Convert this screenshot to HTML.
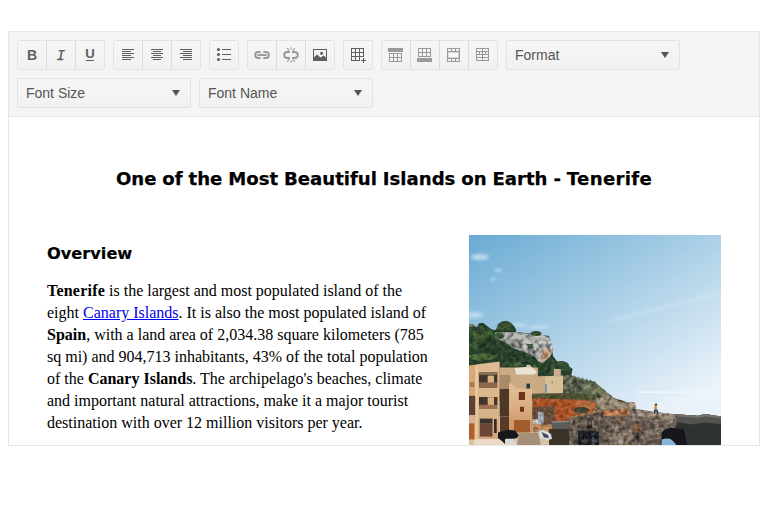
<!DOCTYPE html>
<html>
<head>
<meta charset="utf-8">
<title>Editor</title>
<style>
html,body{margin:0;padding:0;background:#fff;}
body{width:770px;height:506px;overflow:hidden;position:relative;font-family:"Liberation Sans",Arial,Helvetica,sans-serif;font-size:14px;color:#515967;}
#ed{position:absolute;left:8px;top:31px;width:750px;height:413px;border:1px solid #e8e8e8;background:#f5f5f5;}
#tb{position:absolute;left:0;top:0;width:750px;height:84px;border-bottom:1px solid #e9e9e9;background:#f5f5f5;}
.g{position:absolute;top:8px;height:28px;border:1px solid #e3e3e3;border-radius:2px;background:linear-gradient(#f6f6f6,#f1f1f1);box-sizing:content-box;}
.g i{position:absolute;top:0;width:1px;height:28px;background:#dcdcdc;}
.g svg{position:absolute;top:6px;width:16px;height:16px;overflow:visible;}
.g span{position:absolute;top:0;width:28px;height:28px;line-height:28px;text-align:center;color:#5f5f5f;font-weight:bold;}
.tB{left:0;font-size:14px;}
.tI{left:29px;font-family:"DejaVu Sans Mono","Liberation Mono",monospace;font-style:italic;font-weight:normal !important;font-size:14px;-webkit-text-stroke:0.25px #5e5e5e;color:#5e5e5e !important;top:0px !important;}
.tU{left:58px;font-size:13.2px;top:-1px !important;}
.tU:after{content:"";position:absolute;left:10px;top:20px;width:8px;height:1px;background:#5f5f5f;}
.dd{position:absolute;height:28px;width:172px;border:1px solid #e3e3e3;border-radius:2px;background:linear-gradient(#f6f6f6,#f1f1f1);line-height:28px;color:#555;font-size:14px;}
.dd span{position:absolute;left:8px;top:0;}
.dd b{position:absolute;right:10.3px;top:11px;width:0;height:0;border-left:4px solid transparent;border-right:4px solid transparent;border-top:6px solid #555;}
#ct{position:absolute;left:0;top:85px;width:750px;height:328px;background:#fff;overflow:hidden;font-family:"Liberation Serif","Times New Roman",serif;font-size:16px;color:#000;}
#h1{position:absolute;left:0;top:50px;width:750px;text-align:center;margin:0;font-family:"DejaVu Sans",Verdana,sans-serif;font-weight:bold;font-size:18.1px;line-height:24px;white-space:nowrap;letter-spacing:0;word-spacing:-0.4px;-webkit-text-stroke:0.25px #000;}
#h1 span{letter-spacing:0.33px;}
#h2{position:absolute;left:38px;top:125px;margin:0;font-family:"DejaVu Sans",Verdana,sans-serif;font-weight:bold;font-size:16.2px;line-height:24px;white-space:nowrap;-webkit-text-stroke:0.2px #000;}
#p{position:absolute;left:38px;top:163px;width:400px;margin:0;line-height:22px;white-space:nowrap;}
#p a{color:#0000ee;text-decoration:underline;}
#img{position:absolute;left:460px;top:118px;width:252px;height:252px;}
</style>
</head>
<body>
<div id="ed">
  <div id="tb">
    <div class="g" style="left:8px;width:86px"><span class="tB">B</span><i style="left:28px"></i><span class="tI">I</span><i style="left:57px"></i><span class="tU">U</span></div>
    <div class="g" style="left:104px;width:86px"><svg style="left:6px" viewBox="0 0 16 16" shape-rendering="crispEdges"><rect x="2" y="2" width="12" height="1" fill="#5f5f5f"/><rect x="2" y="4" width="9" height="1" fill="#5f5f5f"/><rect x="2" y="6" width="12" height="1" fill="#5f5f5f"/><rect x="2" y="8" width="9" height="1" fill="#5f5f5f"/><rect x="2" y="10" width="12" height="1" fill="#5f5f5f"/><rect x="2" y="12" width="9" height="1" fill="#5f5f5f"/></svg><i style="left:28px"></i><svg style="left:35px" viewBox="0 0 16 16" shape-rendering="crispEdges"><rect x="2" y="2" width="12" height="1" fill="#5f5f5f"/><rect x="4" y="4" width="8" height="1" fill="#5f5f5f"/><rect x="2" y="6" width="12" height="1" fill="#5f5f5f"/><rect x="4" y="8" width="8" height="1" fill="#5f5f5f"/><rect x="2" y="10" width="12" height="1" fill="#5f5f5f"/><rect x="4" y="12" width="8" height="1" fill="#5f5f5f"/></svg><i style="left:57px"></i><svg style="left:64px" viewBox="0 0 16 16" shape-rendering="crispEdges"><rect x="2" y="2" width="12" height="1" fill="#5f5f5f"/><rect x="5" y="4" width="9" height="1" fill="#5f5f5f"/><rect x="2" y="6" width="12" height="1" fill="#5f5f5f"/><rect x="5" y="8" width="9" height="1" fill="#5f5f5f"/><rect x="2" y="10" width="12" height="1" fill="#5f5f5f"/><rect x="5" y="12" width="9" height="1" fill="#5f5f5f"/></svg></div>
    <div class="g" style="left:200px;width:28px"><svg style="left:6px" viewBox="0 0 16 16" shape-rendering="crispEdges"><circle cx="2.5" cy="2.5" r="1.55" fill="#5f5f5f" shape-rendering="auto"/><circle cx="2.5" cy="7.5" r="1.55" fill="#5f5f5f" shape-rendering="auto"/><circle cx="2.5" cy="12.5" r="1.55" fill="#5f5f5f" shape-rendering="auto"/><rect x="6" y="2" width="9" height="1" fill="#5f5f5f"/><rect x="6" y="7" width="9" height="1" fill="#5f5f5f"/><rect x="6" y="12" width="9" height="1" fill="#5f5f5f"/></svg></div>
    <div class="g" style="left:238px;width:86px"><svg style="left:6px" viewBox="0 0 16 16" shape-rendering="crispEdges"><g fill="none" stroke="#9a9a9a" stroke-width="2" shape-rendering="auto"><path d="M6.6 5H4.2a3 3 0 0 0 0 6H6.6"/><path d="M9.4 5H11.8a3 3 0 0 1 0 6H9.4"/><path d="M3.4 8H12.6"/></g></svg><i style="left:28px"></i><svg style="left:35px" viewBox="0 0 16 16" shape-rendering="crispEdges"><g fill="none" stroke="#9a9a9a" shape-rendering="auto"><path stroke-width="2" d="M7 5H4.2a3 3 0 0 0 0 6H7"/><path stroke-width="2" d="M9 5H11.8a3 3 0 0 1 0 6H9"/><path stroke-width="1.15" d="M8 0.2V2.6M8 13.4V15.8M4.2 1.4L6.1 3.5M11.8 1.4L9.9 3.5M4.2 14.6L6.1 12.5M11.8 14.6L9.9 12.5"/></g></svg><i style="left:57px"></i><svg style="left:64px" viewBox="0 0 16 16" shape-rendering="crispEdges"><path shape-rendering="auto" fill="#5f5f5f" fill-rule="evenodd" d="M1 2H15V14H1Z M2 3V10.2L5 7.4L8.6 10.4L11.6 8.6L14 10.4V3Z"/><circle cx="9.6" cy="6.2" r="1.5" fill="#5f5f5f" shape-rendering="auto"/></svg></div>
    <div class="g" style="left:334px;width:28px"><svg style="left:6px" viewBox="0 0 16 16" shape-rendering="crispEdges"><rect x="1" y="1" width="13" height="1" fill="#5f5f5f"/><rect x="1" y="5" width="13" height="1" fill="#5f5f5f"/><rect x="1" y="9" width="13" height="1" fill="#5f5f5f"/><rect x="1" y="13" width="9" height="1" fill="#5f5f5f"/><rect x="1" y="1" width="1" height="13" fill="#5f5f5f"/><rect x="5" y="1" width="1" height="13" fill="#5f5f5f"/><rect x="9" y="1" width="1" height="13" fill="#5f5f5f"/><rect x="13" y="1" width="1" height="9" fill="#5f5f5f"/><rect x="11" y="13" width="5" height="1" fill="#5f5f5f"/><rect x="13" y="11" width="1" height="5" fill="#5f5f5f"/></svg></div>
    <div class="g" style="left:372px;width:115px"><svg style="left:6px" viewBox="0 0 16 16" shape-rendering="crispEdges"><rect x="0" y="1" width="15" height="4" fill="#9a9a9a"/><rect x="1" y="6" width="1" height="9" fill="#9a9a9a"/><rect x="5" y="6" width="1" height="9" fill="#9a9a9a"/><rect x="9" y="6" width="1" height="9" fill="#9a9a9a"/><rect x="13" y="6" width="1" height="9" fill="#9a9a9a"/><rect x="1" y="6" width="13" height="1" fill="#9a9a9a"/><rect x="1" y="10" width="13" height="1" fill="#9a9a9a"/><rect x="1" y="14" width="13" height="1" fill="#9a9a9a"/></svg><i style="left:28px"></i><svg style="left:35px" viewBox="0 0 16 16" shape-rendering="crispEdges"><rect x="1" y="1" width="1" height="9" fill="#9a9a9a"/><rect x="5" y="1" width="1" height="9" fill="#9a9a9a"/><rect x="9" y="1" width="1" height="9" fill="#9a9a9a"/><rect x="13" y="1" width="1" height="9" fill="#9a9a9a"/><rect x="1" y="1" width="13" height="1" fill="#9a9a9a"/><rect x="1" y="5" width="13" height="1" fill="#9a9a9a"/><rect x="1" y="9" width="13" height="1" fill="#9a9a9a"/><rect x="0" y="11" width="15" height="4" fill="#9a9a9a"/></svg><i style="left:57px"></i><svg style="left:64px" viewBox="0 0 16 16" shape-rendering="crispEdges"><rect x="1" y="1" width="13" height="1" fill="#9a9a9a"/><rect x="1" y="4" width="13" height="1" fill="#9a9a9a"/><rect x="1" y="11" width="13" height="1" fill="#9a9a9a"/><rect x="1" y="14" width="13" height="1" fill="#9a9a9a"/><rect x="1" y="1" width="1" height="14" fill="#9a9a9a"/><rect x="13" y="1" width="1" height="14" fill="#9a9a9a"/><rect x="5" y="1" width="1" height="4" fill="#9a9a9a"/><rect x="9" y="1" width="1" height="4" fill="#9a9a9a"/><rect x="5" y="11" width="1" height="4" fill="#9a9a9a"/><rect x="9" y="11" width="1" height="4" fill="#9a9a9a"/><rect x="2.5" y="5.5" width="10" height="5" fill="#fbfbfb" stroke="#d6d6d6" stroke-width="1"/></svg><i style="left:86px"></i><svg style="left:93px" viewBox="0 0 16 16" shape-rendering="crispEdges"><rect x="1" y="1" width="13" height="1" fill="#9a9a9a"/><rect x="1" y="4" width="13" height="1" fill="#9a9a9a"/><rect x="1" y="7" width="13" height="1" fill="#9a9a9a"/><rect x="1" y="10" width="13" height="1" fill="#9a9a9a"/><rect x="1" y="13" width="13" height="1" fill="#9a9a9a"/><rect x="1" y="1" width="1" height="13" fill="#9a9a9a"/><rect x="13" y="1" width="1" height="13" fill="#9a9a9a"/><rect x="7" y="1" width="1" height="13" fill="#9a9a9a"/><rect x="4" y="4" width="1" height="4" fill="#9a9a9a"/><rect x="10" y="4" width="1" height="4" fill="#9a9a9a"/></svg></div>
    <div class="dd" style="left:497px;top:8px"><span>Format</span><b></b></div>
    <div class="dd" style="left:8px;top:46px"><span>Font Size</span><b></b></div>
    <div class="dd" style="left:190px;top:46px"><span>Font Name</span><b></b></div>
  </div>
  <div id="ct">
    <h1 id="h1">One of the Most Beautiful Islands on Earth - <span>Tenerife</span></h1>
    <h2 id="h2">Overview</h2>
    <p id="p"><b style="letter-spacing:0.22px">Tenerife</b> is the largest and most populated island of the<br>eight <a>Canary Islands</a>. It is also the most populated island of<br><b>Spain</b>, with a land area of 2,034.38 square kilometers (785<br>sq mi) and 904,713 inhabitants, 43% of the total population<br>of the <b>Canary Islands</b>. The archipelago's beaches, climate<br>and important natural attractions, make it a major tourist<br>destination with over 12 million visitors per year.</p>
    <svg id="img" viewBox="0 0 252 252">
  <defs>
    <linearGradient id="sky" gradientUnits="userSpaceOnUse" x1="0" y1="0" x2="135" y2="219">
      <stop offset="0" stop-color="#69abd3"/>
      <stop offset="1" stop-color="#ebf3fa"/>
    </linearGradient>
    <filter id="tex" x="-2%" y="-2%" width="104%" height="104%" color-interpolation-filters="sRGB">
      <feTurbulence type="fractalNoise" baseFrequency="0.22" numOctaves="2" seed="7" result="n"/>
      <feColorMatrix in="n" type="matrix" values="0 0 0 0 0  0 0 0 0 0  0 0 0 0 0  1.4 0 0 0 -0.56" result="dk"/>
      <feColorMatrix in="n" type="matrix" values="0 0 0 0 1  0 0 0 0 1  0 0 0 0 1  0 0.8 0 0 -0.37" result="lt"/>
      <feComposite in="dk" in2="SourceGraphic" operator="in" result="dkm"/>
      <feComposite in="lt" in2="SourceGraphic" operator="in" result="ltm"/>
      <feMerge><feMergeNode in="SourceGraphic"/><feMergeNode in="dkm"/><feMergeNode in="ltm"/></feMerge>
    </filter>
    <filter id="texv" x="-2%" y="-2%" width="104%" height="104%" color-interpolation-filters="sRGB">
      <feTurbulence type="fractalNoise" baseFrequency="0.22" numOctaves="2" seed="11" result="n"/>
      <feColorMatrix in="n" type="matrix" values="0 0 0 0 0.04  0 0 0 0 0.1  0 0 0 0 0.06  1.6 0 0 0 -0.6" result="dk"/>
      <feColorMatrix in="n" type="matrix" values="0 0 0 0 0.45  0 0 0 0 0.56  0 0 0 0 0.32  0 1.0 0 0 -0.42" result="lt"/>
      <feComposite in="dk" in2="SourceGraphic" operator="in" result="dkm"/>
      <feComposite in="lt" in2="SourceGraphic" operator="in" result="ltm"/>
      <feMerge><feMergeNode in="SourceGraphic"/><feMergeNode in="dkm"/><feMergeNode in="ltm"/></feMerge>
    </filter>
    <filter id="texl" x="-2%" y="-2%" width="104%" height="104%" color-interpolation-filters="sRGB">
      <feTurbulence type="fractalNoise" baseFrequency="0.25" numOctaves="2" seed="5" result="n"/>
      <feColorMatrix in="n" type="matrix" values="0 0 0 0 0.1  0 0 0 0 0.05  0 0 0 0 0.03  0.9 0 0 0 -0.36" result="dk"/>
      <feColorMatrix in="n" type="matrix" values="0 0 0 0 1  0 0 0 0 0.85  0 0 0 0 0.7  0 0.6 0 0 -0.27" result="lt"/>
      <feComposite in="dk" in2="SourceGraphic" operator="in" result="dkm"/>
      <feComposite in="lt" in2="SourceGraphic" operator="in" result="ltm"/>
      <feMerge><feMergeNode in="SourceGraphic"/><feMergeNode in="dkm"/><feMergeNode in="ltm"/></feMerge>
    </filter>
    <linearGradient id="mb" x1="0" y1="0" x2="0" y2="1">
      <stop offset="0" stop-color="#e3be95"/><stop offset="0.45" stop-color="#dbb085"/><stop offset="1" stop-color="#c78f5f"/>
    </linearGradient>
    <linearGradient id="lb" x1="0" y1="0" x2="0" y2="1">
      <stop offset="0" stop-color="#debb92"/><stop offset="0.6" stop-color="#dab68c"/><stop offset="1" stop-color="#d2a87c"/>
    </linearGradient>
    <filter id="b1" x="-5%" y="-5%" width="110%" height="110%"><feGaussianBlur stdDeviation="0.5"/></filter>
    <filter id="b2" x="-20%" y="-20%" width="140%" height="140%"><feGaussianBlur stdDeviation="1.6"/></filter>
    <clipPath id="cp"><rect width="252" height="252"/></clipPath>
  </defs>
  <g clip-path="url(#cp)">
  <rect width="252" height="252" fill="url(#sky)"/>
  <!-- clouds -->
  <g filter="url(#b2)" fill="#cfe4f3" opacity="0.75">
    <ellipse cx="11" cy="22" rx="9" ry="3.2"/>
    <ellipse cx="29" cy="35" rx="4" ry="1.6"/>
    <ellipse cx="24" cy="44" rx="2.5" ry="1.6"/>
    <ellipse cx="5" cy="80" rx="9" ry="3"/>
    <ellipse cx="70" cy="92" rx="10" ry="1.6"/>
    <ellipse cx="50" cy="90" rx="8" ry="1.6"/>
  </g>
  <path d="M140 86 L252 58" stroke="#e4eff8" stroke-width="3" opacity="0.3" filter="url(#b2)"/>
  <rect x="168" y="156.4" width="84" height="1.5" fill="#f6f9fc" opacity="0.75" filter="url(#b1)"/>
  <g filter="url(#b1)">
  <g filter="url(#texv)">
  <!-- far-left rock + vegetation base -->
  <path d="M0 89 L5.5 89.5 L5.5 98 L0 99Z" fill="#8f887b"/>
  <path d="M0 92 L5 91 L8 92 L10 88.5 L14 88 L18 91 L22 94 L26 95.5 L27.7 93 L29 89 L33 86.5 L38 86 L42 88 L45 91 L47 95 L47 97 L80 101 L84 121 L88.3 127 L96.6 128.4 L103.5 134 L102 141 L94 143 L80 141 L80 166 L0 166Z" fill="#2c4631"/>
  </g>
  <g filter="url(#tex)">
  <!-- cliff -->
  <path d="M26 97.5 L47 97 L63 99.4 L73.4 100.3 L80 102 L83 107.4 L84 116 L81.3 120.8 L77.4 124.8 L73.4 128 L70 127 L65.5 121.6 L57.6 117.7 L45.8 113.7 L34 106 L26 103Z" fill="#b9bbb6"/>
  <path d="M27 98 L46 98 L56 100 L50 104 L38 103 L28 101Z" fill="#b9bcb9" opacity="0.9"/>
  <path d="M36 103 L48 105 L54 111 L50 114.5 L44 111Z" fill="#8a8f8a" opacity="0.85"/>
  <path d="M50 104 L62 102 L66 106 L60 112 L54 110Z" fill="#c3c5c2" opacity="0.9"/>
  <path d="M58 109 L64 109 L64.5 113.7 L59 114Z" fill="#3c5236" opacity="0.9"/>
  <path d="M56 113 L66 114 L70 122 L66 121 L58 117.5Z" fill="#8b8f8b" opacity="0.85"/>
  <path d="M66 101 L73.4 100.5 L80 102.5 L83 107.4 L83.8 115 L78 116 L72 112 L68 106Z" fill="#c9cac6"/>
  <path d="M68 110 L74 113 L75 121 L70 124 L66 118Z" fill="#b4b6b2" opacity="0.9"/>
  <path d="M74 114 L84 114 L84 116 L81.3 120.8 L77.4 124.8 L73.4 128 L71.5 124 L73 118Z" fill="#c8a88a"/>
  <path d="M75.5 119 L80 118 L79 122 L76 124Z" fill="#a2754f" opacity="0.8"/>
  </g>
  <g filter="url(#texv)">
  <!-- vegetation highlights -->
  <path d="M0 100 L26 104 L47 116 L58 122 L66 128 L60 134 L30 127 L0 131Z" fill="#263f2c" opacity="0.7"/>
  <ellipse cx="30" cy="101" rx="5" ry="3.5" fill="#3f5f38" opacity="0.8"/>
  <ellipse cx="4" cy="112" rx="6" ry="4" fill="#43633a" opacity="0.7"/>
  <ellipse cx="60" cy="131" rx="7" ry="3" fill="#3c5a38" opacity="0.8"/>
  <ellipse cx="75" cy="134" rx="6" ry="4" fill="#2a4530" opacity="0.9"/>
  <ellipse cx="9" cy="100" rx="8" ry="5" fill="#4d6c3a" opacity="0.8"/>
  <ellipse cx="20" cy="99" rx="5" ry="4" fill="#466638" opacity="0.7"/>
  <ellipse cx="13" cy="122" rx="14" ry="3.6" fill="#5a7a42" opacity="0.85"/>
  <ellipse cx="47" cy="129" rx="6" ry="2.5" fill="#4a6a3a" opacity="0.7"/>
  <ellipse cx="37" cy="90" rx="6" ry="3" fill="#3f5d38" opacity="0.8"/>
  <ellipse cx="67" cy="98.5" rx="5.5" ry="2.6" fill="#3a5634"/>
  <ellipse cx="92" cy="131" rx="8" ry="5" fill="#34503a" opacity="0.9"/>
  </g>
  <g filter="url(#tex)">
  <!-- cactus slope -->
  <path d="M94 141.4 L100 139.5 L110 143 L125.7 147 L135.4 155 L145 163 L160 167.7 L166 167 L166 176 L80 176 L80 160 L94 158Z" fill="#6a6e52"/>
  <path d="M98 144 L112 145 L124 150 L128 158 L120 164 L100 163Z" fill="#56624a" opacity="0.85"/>
  <path d="M112 148 L126 150 L134 157 L128 162 L116 158Z" fill="#7c8260" opacity="0.8"/>
  <path d="M128 163 L140 161 L146 164.5 L160 168.5 L166 168.5 L166 176 L126 174Z" fill="#a79983" opacity="0.9"/>
  <path d="M130 157 L138 158 L144 163 L136 165Z" fill="#8a7a64" opacity="0.8"/>
  <path d="M101 142 l.8 -3 l.8 3 M105 143.5 l.8 -3.5 l.8 3.5 M109 144 l.8 -3 l.8 3 M113 145 l.8 -3.5 l.8 3.5 M117 146 l.8 -3 l.8 3 M121 147 l.8 -3 l.8 3 M125 148 l.8 -2.6 l.8 2.6" fill="#4f5f50"/>
  </g>
  <!-- upper stone walls / houses -->
  <path d="M30.7 132.6 L69 132.6 L69 160 L30.7 160Z" fill="#cbab84"/>
  <path d="M45.7 133 L62 131.5 L68 137 L65 139.5 L47 139.5Z" fill="#ece3d4"/>
  <rect x="57.4" y="129.8" width="4.2" height="3.4" fill="#d9c6b0"/>
  <rect x="57.4" y="148.6" width="3.6" height="5.2" fill="#2b3b40"/>
  <path d="M68 141.6 L94 140.6 L94 159 L68 159Z" fill="#d9bf97"/>
  <path d="M68 141.6 L76 141.3 L76 159 L68 159Z" fill="#c3a47c" opacity="0.8"/>
  <rect x="84.8" y="134" width="7" height="7.4" fill="#cbac8b"/>
  <rect x="75.8" y="149" width="2.2" height="9" fill="#7a9aa8"/>
  <rect x="82.5" y="146" width="1.5" height="2.5" fill="#8a9aa0"/>
  <g filter="url(#texl)">
  <!-- strip of vegetation above orange earth -->
  <path d="M63.4 158.7 L100 158 L126 160 L126 165 L63.4 164.5Z" fill="#4d5233"/>
  <!-- orange earth -->
  <path d="M63.4 163.5 L105 164.5 L124 166 L128 170 L124 177 L100 186 L63.4 186Z" fill="#b35427"/>
  <path d="M106 166 L123 167 L127 170 L122 174.5 L108 171Z" fill="#c8794a" opacity="0.85"/>
  <ellipse cx="112.5" cy="175.3" rx="8" ry="3.2" fill="#3b4231"/>
  <path d="M63.4 172 L86 171 L86 190 L63.4 190Z" fill="#6a4d3b"/>
  <rect x="63.6" y="184" width="5.4" height="5.5" fill="#e2d9d0"/>
  <rect x="69" y="177" width="5.7" height="12.5" fill="#a3b3c2"/>
  <path d="M63.4 189.5 L83 189.5 L83 198 L63.4 198Z" fill="#c48e5c"/>
  </g>
  <!-- ground -->
  <path d="M0 198 L101 197 L101 210 L0 210Z" fill="#d9c2a6"/>
  <path d="M5 201.5 L31 199 L50 210 L5 210Z" fill="#ead9c4"/>
  <path d="M50 198 L69 198 L72 210 L48 210Z" fill="#a68f78"/>
  <!-- awning + dark below -->
  <path d="M82.8 186.5 L100 185.7 L100 194 L82.8 194Z" fill="#5b5b58"/>
  <path d="M82.8 186.5 L100 185.7 L100 187 L82.8 187.8Z" fill="#8b8f90"/>
  <path d="M80 194 L101 194 L101 210 L80 210Z" fill="#3a3029"/>
  <g filter="url(#tex)">
  <!-- stone boathouse 1 -->
  <path d="M100 181.5 L135.4 174.6 L135.4 210 L100 210Z" fill="#6c5f52"/>
  <path d="M100 181.5 L135.4 174.6 L135.4 176.4 L100 183.4Z" fill="#b17a4b"/>
  <rect x="118" y="186.4" width="5" height="6.2" fill="#26221f"/>
  <path d="M109 195.4 L129.8 195.4 L129.8 210 L109 210Z" fill="#1d2126"/>
  <!-- stone house 2 -->
  <path d="M134.7 180 L160 180 L164 176 L164 210 L134.7 210Z" fill="#78675a"/>
  <path d="M134.7 175 L160 173.5 L163 175 L160 180.6 L134.7 181Z" fill="#c27a4b"/>
  <rect x="147.8" y="183" width="4.9" height="7" fill="#8c624a"/>
  <path d="M140 198 L164 198 L164 210 L140 210Z" fill="#93826f"/>
  <!-- right rocks -->
  <path d="M160 167 L166 167.5 L166.5 174 L185 176.7 L208.4 179.4 L212 180 L212 210 L160 210Z" fill="#7f7063"/>
  <path d="M160 167 L166 167.5 L166.5 174 L160 175Z" fill="#b9a189"/>
  <path d="M166 174.6 L185 177 L207 179.6 L206 184 L190 186.5 L172 184Z" fill="#a5937d" opacity="0.9"/>
  <path d="M164 186 L182 187 L196 185.5 L206 189 L195 195 L192 210 L172 210 L165 200Z" fill="#685c52" opacity="0.85"/>
  <path d="M170 181 L186 183 L185 185.5 L171 184Z" fill="#5d5248" opacity="0.6"/>
  <path d="M175 196 L190 193 L191 204 L178 206Z" fill="#8d7d6c" opacity="0.8"/>
  <path d="M164 188 L173 188 L172 196 L164 198Z" fill="#94603f" opacity="0.8"/>
  <rect x="167.3" y="197.5" width="3" height="10.5" rx="1.2" fill="#2a2a30"/>
  </g>
  <g>
  <path d="M207 179.3 L229 180.8 L236 179 L252 181.5 L252 210 L210 210 L205 196 L208 186Z" fill="#2f3133"/>
  <path d="M207 179.3 L229 180.8 L236 179 L252 181.5 L252 189 L236 187.5 L222 189.5 L208 187Z" fill="#55534f"/>
  <path d="M207 179.3 L229 180.8 L236 179 L252 181.5 L252 183.2 L236 181.2 L229 183 L208 181.6Z" fill="#74706b"/>
  <path d="M192.5 210 L192.5 198 Q196 192.5 204 193 L215 194 L218 210Z" fill="#14171b"/>
  <path d="M192.5 210 L193 204.5 Q199 202.5 203 205 L207.5 210Z" fill="#86b4d6"/>
  <!-- person -->
  <rect x="185.3" y="169.6" width="2.6" height="5" rx="0.8" fill="#e08a30"/>
  <rect x="186" y="168.6" width="2.2" height="1.8" rx="0.8" fill="#2a3038"/>
  <path d="M185.2 174.4 L188.6 174.4 L189.6 178.6 L188.2 178.6 L187 175.8 L186 178.6 L184.8 178.6Z" fill="#2f3a48"/>
  <!-- left building -->
  <path d="M0 130.5 L7 129.5 L7 204.4 L0 204.4Z" fill="#d8a878"/>
  <path d="M7 129.5 L30.7 126.4 L30.7 204 L7 204Z" fill="url(#lb)"/>
  <rect x="6.2" y="131" width="2.6" height="73" fill="#e7cba4"/>
  <rect x="0" y="160.8" width="6.2" height="19.4" fill="#5c4232"/>
  <rect x="0.8" y="147" width="4.5" height="5" fill="#a87850"/>
  <rect x="0" y="180" width="7" height="8.4" fill="#d9b292"/>
  <rect x="0" y="188.4" width="5.3" height="16" fill="#b05e2c"/>
  <!-- balcony 1 -->
  <rect x="10" y="137.4" width="18.4" height="10.4" fill="#43352b"/>
  <rect x="9.7" y="137.4" width="18.7" height="2.4" fill="#8a7258"/>
  <rect x="18.7" y="140.6" width="6.3" height="7.2" fill="#d9b080"/>
  <rect x="10" y="147.6" width="18.4" height="5.4" fill="#8c684b"/>
  <!-- balcony 2 -->
  <rect x="10" y="162" width="18.4" height="8" fill="#43352b"/>
  <rect x="18.7" y="162.2" width="6.3" height="7.8" fill="#d9b080"/>
  <rect x="10" y="169.8" width="18.4" height="4.2" fill="#9a7050"/>
  <!-- ground floor -->
  <rect x="10.8" y="183.6" width="12.7" height="5" fill="#3a3030"/>
  <rect x="10.8" y="188.4" width="12.7" height="13.2" fill="#6b4538"/>
  <rect x="25" y="184" width="2.7" height="14" fill="#3a2a25"/>
  <!-- gap between buildings -->
  <rect x="30.7" y="140" width="10.8" height="14" fill="#a88a68"/>
  <rect x="30.7" y="154" width="10" height="27.5" fill="#4d3727"/>
  <rect x="31" y="181.5" width="9" height="16" fill="#5b3929"/>
  <!-- middle building -->
  <path d="M40 148.3 L41.5 148.3 L47.7 153.8 L63 153.8 L63 197.4 L40 197.4Z" fill="url(#mb)"/>
  <rect x="49.8" y="157" width="6.2" height="8" fill="#6e341b"/>
  <rect x="51" y="171.8" width="4" height="4.9" fill="#70361c"/>
  <rect x="45" y="185" width="16" height="12.4" fill="#a35c2d"/>
  <!-- boats -->
  <path d="M29 197.5 L36 195.5 L38 194.7 L46 195.5 L49.8 200 L48 203 L44 204 L44 209 L36 209 L33 206 L29 203Z" fill="#15181a"/>
  <rect x="36" y="203.7" width="9.7" height="5.5" rx="1" fill="#d8d8d8"/>
  <path d="M70 196 L74 194.7 L82 199 L83 204 L78 205 L72 203 L70 199Z" fill="#dcdcdc"/>
  <path d="M72.5 197 L79 200 L80 203 L75 202.5Z" fill="#3a4a5a"/>
  </g>
  </g>
</svg>
  </div>
</div>
</body>
</html>
